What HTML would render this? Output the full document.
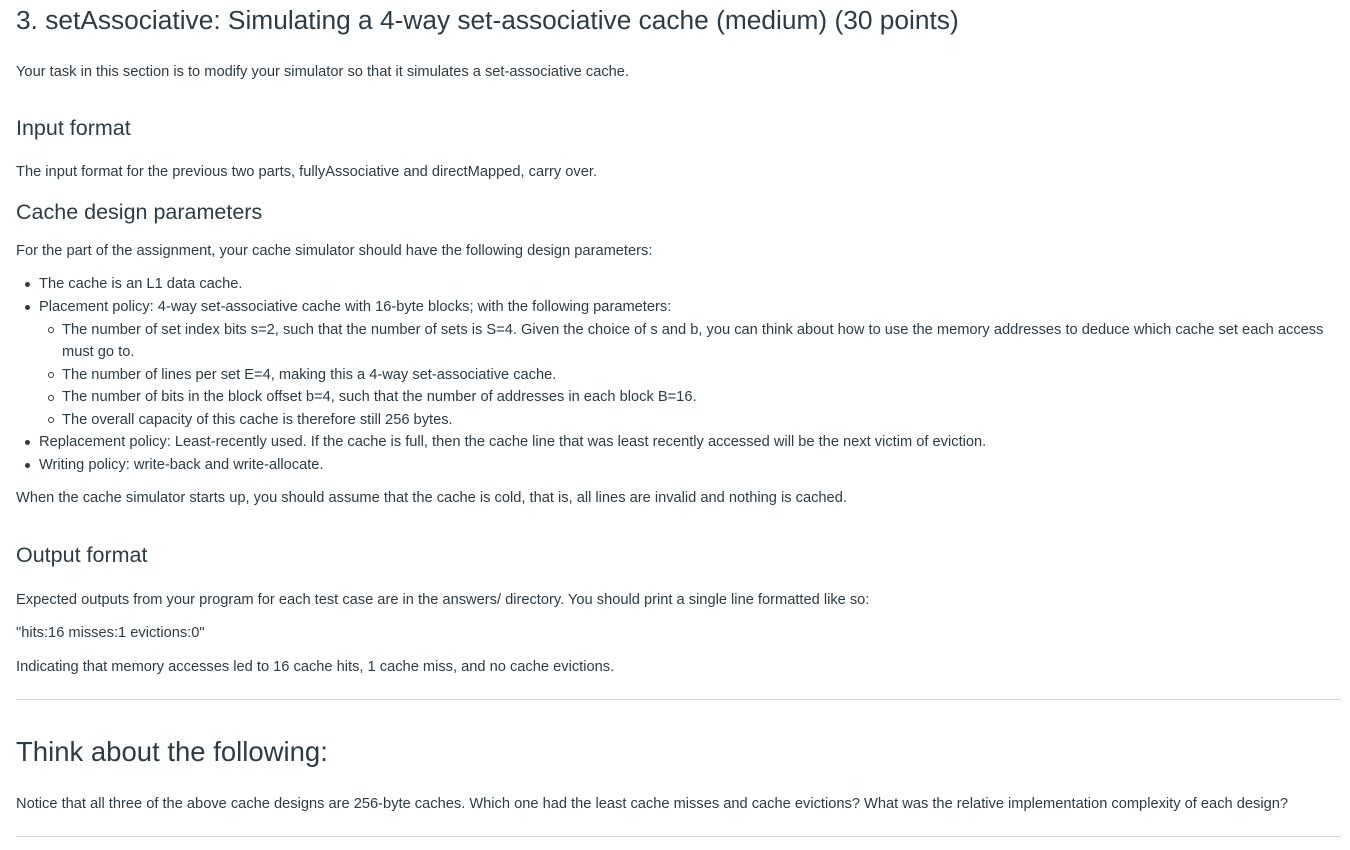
<!DOCTYPE html>
<html><head><meta charset="utf-8"><style>
body{margin:0;width:1350px;height:850px;background:#fff;overflow:hidden;font-family:"Liberation Sans",Arial,sans-serif;color:#2d3b45;position:relative}
.t{position:absolute;white-space:nowrap;font-size:14.65px;line-height:20px}
.h{position:absolute;white-space:nowrap;font-size:21.5px;line-height:30px;color:#2d3b45}
.d{position:absolute;width:5px;height:5px;border-radius:50%;background:#2d3b45}
.c{position:absolute;width:4px;height:4px;border-radius:50%;border:1px solid #2d3b45}
.hr{position:absolute;left:16px;width:1325px;height:1px;background:#d0d4d7}
</style></head><body>
<div class="h" style="left:16px;top:3px;font-size:26.3px;line-height:34px">3. setAssociative: Simulating a 4-way set-associative cache (medium) (30 points)</div>
<div class="t" style="left:16px;top:62px">Your task in this section is to modify your simulator so that it simulates a set-associative cache.</div>
<div class="h" style="left:16px;top:113px">Input format</div>
<div class="t" style="left:16px;top:162px">The input format for the previous two parts, fullyAssociative and directMapped, carry over.</div>
<div class="h" style="left:16px;top:197px">Cache design parameters</div>
<div class="t" style="left:16px;top:241px">For the part of the assignment, your cache simulator should have the following design parameters:</div>
<div class="d" style="left:25px;top:282px"></div><div class="t" style="left:39px;top:274px">The cache is an L1 data cache.</div>
<div class="d" style="left:25px;top:305px"></div><div class="t" style="left:39px;top:297px">Placement policy: 4-way set-associative cache with 16-byte blocks; with the following parameters:</div>
<div class="c" style="left:48px;top:327px"></div><div class="t" style="left:62px;top:320px">The number of set index bits s=2, such that the number of sets is S=4. Given the choice of s and b, you can think about how to use the memory addresses to deduce which cache set each access</div>
<div class="t" style="left:62px;top:342px">must go to.</div>
<div class="c" style="left:48px;top:372px"></div><div class="t" style="left:62px;top:365px">The number of lines per set E=4, making this a 4-way set-associative cache.</div>
<div class="c" style="left:48px;top:395px"></div><div class="t" style="left:62px;top:387px">The number of bits in the block offset b=4, such that the number of addresses in each block B=16.</div>
<div class="c" style="left:48px;top:417px"></div><div class="t" style="left:62px;top:410px">The overall capacity of this cache is therefore still 256 bytes.</div>
<div class="d" style="left:25px;top:440px"></div><div class="t" style="left:39px;top:432px">Replacement policy: Least-recently used. If the cache is full, then the cache line that was least recently accessed will be the next victim of eviction.</div>
<div class="d" style="left:25px;top:463px"></div><div class="t" style="left:39px;top:455px">Writing policy: write-back and write-allocate.</div>
<div class="t" style="left:16px;top:488px">When the cache simulator starts up, you should assume that the cache is cold, that is, all lines are invalid and nothing is cached.</div>
<div class="h" style="left:16px;top:540px">Output format</div>
<div class="t" style="left:16px;top:590px">Expected outputs from your program for each test case are in the answers/ directory. You should print a single line formatted like so:</div>
<div class="t" style="left:16px;top:623px">"hits:16 misses:1 evictions:0"</div>
<div class="t" style="left:16px;top:657px">Indicating that memory accesses led to 16 cache hits, 1 cache miss, and no cache evictions.</div>
<div class="hr" style="top:699px"></div>
<div class="h" style="left:16px;top:734px;font-size:27.5px;line-height:36px">Think about the following:</div>
<div class="t" style="left:16px;top:794px">Notice that all three of the above cache designs are 256-byte caches. Which one had the least cache misses and cache evictions? What was the relative implementation complexity of each design?</div>
<div class="hr" style="top:836px"></div>
</body></html>
